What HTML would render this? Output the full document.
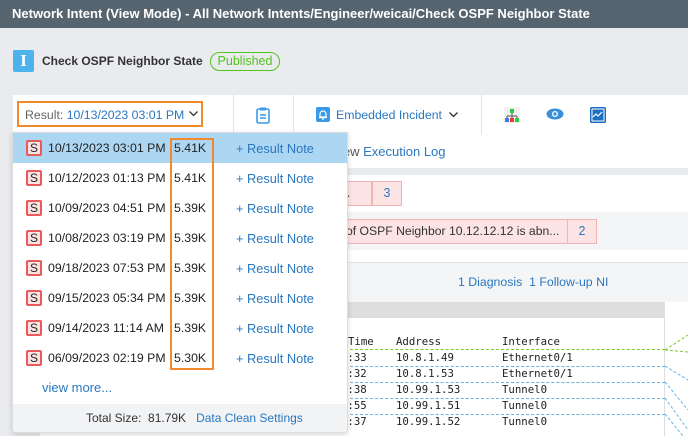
<!DOCTYPE html>
<html><head><style>
*{margin:0;padding:0;box-sizing:border-box}
body{width:688px;height:436px;overflow:hidden;position:relative;background:#e9ebee;font-family:"Liberation Sans",sans-serif;font-size:12.5px;color:#333}
.a{position:absolute;white-space:nowrap}
.blue{color:#2a77c0}
.mono{font-family:"DejaVu Sans Mono","Liberation Mono",monospace;font-size:10.7px;color:#222}
.row{position:absolute;left:0;width:335px;height:30px}
.s{position:absolute;left:13px;top:7px;width:16px;height:16px;border:2px solid #ea5a5a;background:#fde4e4;border-radius:2px;font-size:12px;line-height:12px;text-align:center;color:#222}
.d{position:absolute;left:35px;top:8px;font-size:12.3px;color:#222}
.k{position:absolute;left:161px;top:8px;font-size:12.3px;color:#222}
.n{position:absolute;left:223px;top:8px;font-size:12.8px;color:#2a77c0}
.dl{position:absolute;left:345px;width:320px;border-top:1px dashed #6ab2e0}
</style></head><body>
<div class="a" style="left:0;top:0;width:688px;height:28px;background:#56646f"></div>
<div class="a" style="left:12px;top:6px;color:#fff;font-weight:bold;font-size:13px">Network Intent (View Mode) - All Network Intents/Engineer/weicai/Check OSPF Neighbor State</div>
<div class="a" style="left:13px;top:50px;width:21px;height:22px;background:#4db3ee;border-radius:2px;color:#fff;font-family:'Liberation Serif',serif;font-weight:bold;font-size:17px;text-align:center;line-height:22px">I</div>
<div class="a" style="left:42px;top:54px;font-weight:bold;font-size:12px;color:#333">Check OSPF Neighbor State</div>
<div class="a" style="left:210px;top:52px;width:70px;height:19px;border:1.5px solid #52c41a;border-radius:10px;color:#52c41a;font-size:12.5px;text-align:center;line-height:16px">Published</div>
<!-- toolbar -->
<div class="a" style="left:13px;top:95px;width:675px;height:73px;background:#fff"></div>
<div class="a" style="left:233px;top:95px;width:1px;height:40px;background:#e4e4e4"></div>
<div class="a" style="left:293px;top:95px;width:1px;height:40px;background:#e4e4e4"></div>
<div class="a" style="left:481px;top:95px;width:1px;height:40px;background:#e4e4e4"></div>
<div class="a" style="left:17px;top:101px;width:186px;height:26px;border:2px solid #f08a2c"></div>
<div class="a" style="left:25px;top:108px;font-size:12.3px;color:#666">Result: <span class="blue">10/13/2023 03:01 PM</span></div>
<svg class="a" style="left:189px;top:111px" width="9" height="6"><path d="M0.5 0.5L4.5 4.5L8.5 0.5" stroke="#333" fill="none" stroke-width="1.3"/></svg>
<svg class="a" style="left:256px;top:107px" width="14" height="17" viewBox="0 0 14 17"><rect x="1" y="2" width="12" height="14" rx="1.5" fill="none" stroke="#3a9ae8" stroke-width="1.6"/><rect x="4" y="0.5" width="6" height="3" fill="#3a9ae8"/><path d="M4 8h6M4 11h6" stroke="#3a9ae8" stroke-width="1.4"/></svg>
<svg class="a" style="left:316px;top:107px" width="14" height="15"><rect width="14" height="15" rx="2" fill="#3a9ae8"/><path d="M4 10V7a3 3 0 0 1 6 0v3zM3 10.5h8M6 12h2" stroke="#fff" fill="none" stroke-width="1.2"/></svg>
<div class="a" style="left:336px;top:108px;font-size:12.3px;color:#2a77c0">Embedded Incident</div>
<svg class="a" style="left:449px;top:112px" width="9" height="6"><path d="M0.5 0.5L4.5 4.5L8.5 0.5" stroke="#333" fill="none" stroke-width="1.3"/></svg>
<svg class="a" style="left:504px;top:107px" width="16" height="16"><rect width="16" height="16" fill="#f2f2f2"/><rect x="6" y="2" width="4" height="4" fill="#2ecc40"/><path d="M8 6v3M3 9h10M3 9v2M8 9v2M13 9v2" stroke="#555"/><rect x="1" y="11" width="4" height="4" fill="#3a7de8"/><rect x="6" y="11" width="4" height="4" fill="#e83a3a"/><rect x="11" y="11" width="4" height="4" fill="#2ecc40"/></svg>
<svg class="a" style="left:546px;top:108px" width="18" height="12"><ellipse cx="9" cy="6" rx="8.5" ry="5.5" fill="#3a8fd8"/><circle cx="9" cy="6" r="3" fill="#fff"/><circle cx="9" cy="6" r="1.7" fill="#3a8fd8"/></svg>
<svg class="a" style="left:590px;top:107px" width="16" height="16"><rect width="16" height="16" rx="1.5" fill="#1d6fc0"/><rect x="2" y="2" width="12" height="12" fill="none" stroke="#fff" stroke-width="1"/><path d="M3 10l3-3 2 2 4-4" stroke="#fff" fill="none" stroke-width="1.2"/></svg>
<div class="a" style="left:340px;top:144px;font-size:13px;color:#555">iew <span class="blue">Execution Log</span></div>
<div class="a" style="left:13px;top:175px;width:675px;height:37px;background:#fff"></div>
<div class="a" style="left:330px;top:181px;width:42px;height:25px;background:#fde4e4;border:1px solid #f4b3b3"></div>
<div class="a" style="left:344px;top:186px;font-size:12.5px">l.</div>
<div class="a" style="left:372px;top:181px;width:30px;height:25px;background:#fde4e4;border:1px solid #f4b3b3;color:#2a77c0;text-align:center;line-height:23px">3</div>
<div class="a" style="left:13px;top:212px;width:675px;height:38px;background:#f4f5f7"></div>
<div class="a" style="left:330px;top:219px;width:238px;height:25px;background:#fde4e4;border:1px solid #f4b3b3"></div>
<div class="a" style="left:346px;top:224px;font-size:12.2px">of OSPF Neighbor 10.12.12.12 is abn...</div>
<div class="a" style="left:567px;top:219px;width:30px;height:25px;background:#fde4e4;border:1px solid #f4b3b3;color:#2a77c0;text-align:center;line-height:23px">2</div>
<div class="a" style="left:13px;top:250px;width:675px;height:12px;background:#fff"></div>
<div class="a" style="left:13px;top:262px;width:675px;height:40px;background:#f4f5f7;border-top:1px solid #e4e4e4"></div>
<div class="a" style="left:458px;top:275px;font-size:12.3px;color:#2a77c0">1 Diagnosis&nbsp; 1 Follow-up NI</div>
<div class="a" style="left:40px;top:302px;width:625px;height:134px;background:#fff;border-right:1px solid #ddd"></div>
<div class="a" style="left:40px;top:302px;width:625px;height:16px;background:#dedede"></div>
<div class="a" style="left:665px;top:302px;width:23px;height:134px;background:#fff"></div>
<div class="a mono" style="left:348px;top:335px">Time</div><div class="a mono" style="left:396px;top:335px">Address</div><div class="a mono" style="left:502px;top:335px">Interface</div>
<div class="a mono" style="left:341px;top:351px">0:33</div><div class="a mono" style="left:396px;top:351px">10.8.1.49</div><div class="a mono" style="left:502px;top:351px">Ethernet0/1</div>
<div class="a mono" style="left:341px;top:367px">0:32</div><div class="a mono" style="left:396px;top:367px">10.8.1.53</div><div class="a mono" style="left:502px;top:367px">Ethernet0/1</div>
<div class="a mono" style="left:341px;top:383px">1:38</div><div class="a mono" style="left:396px;top:383px">10.99.1.53</div><div class="a mono" style="left:502px;top:383px">Tunnel0</div>
<div class="a mono" style="left:341px;top:399px">1:55</div><div class="a mono" style="left:396px;top:399px">10.99.1.51</div><div class="a mono" style="left:502px;top:399px">Tunnel0</div>
<div class="a mono" style="left:341px;top:415px">1:37</div><div class="a mono" style="left:396px;top:415px">10.99.1.52</div><div class="a mono" style="left:502px;top:415px">Tunnel0</div>
<div class="dl" style="top:349px;border-color:#7acb2c"></div>
<div class="dl" style="top:366px"></div>
<div class="dl" style="top:382px"></div>
<div class="dl" style="top:398px"></div>
<div class="dl" style="top:414px"></div>
<svg class="a" style="left:665px;top:330px" width="23" height="106"><path d="M0 20L23 5M0 20L23 22" stroke="#7acb2c" stroke-dasharray="3,2" fill="none"/><path d="M0 36L23 50M0 52L23 80M0 68L23 100M0 84L18 106" stroke="#6ab2e0" stroke-dasharray="3,2" fill="none"/></svg>
<!-- dropdown -->
<div class="a" style="left:12px;top:132px;width:336px;height:301px;background:#fff;border:1px solid #ddd;border-radius:0 0 4px 4px;box-shadow:0 2px 6px rgba(0,0,0,.15);overflow:hidden">
<div class="row" style="top:0;background:#acd6f2"><div class="s">S</div><div class="d">10/13/2023 03:01 PM</div><div class="k">5.41K</div><div class="n">+ Result Note</div></div>
<div class="row" style="top:30px"><div class="s">S</div><div class="d">10/12/2023 01:13 PM</div><div class="k">5.41K</div><div class="n">+ Result Note</div></div>
<div class="row" style="top:60px"><div class="s">S</div><div class="d">10/09/2023 04:51 PM</div><div class="k">5.39K</div><div class="n">+ Result Note</div></div>
<div class="row" style="top:90px"><div class="s">S</div><div class="d">10/08/2023 03:19 PM</div><div class="k">5.39K</div><div class="n">+ Result Note</div></div>
<div class="row" style="top:120px"><div class="s">S</div><div class="d">09/18/2023 07:53 PM</div><div class="k">5.39K</div><div class="n">+ Result Note</div></div>
<div class="row" style="top:150px"><div class="s">S</div><div class="d">09/15/2023 05:34 PM</div><div class="k">5.39K</div><div class="n">+ Result Note</div></div>
<div class="row" style="top:180px"><div class="s">S</div><div class="d">09/14/2023 11:14 AM</div><div class="k">5.39K</div><div class="n">+ Result Note</div></div>
<div class="row" style="top:210px"><div class="s">S</div><div class="d">06/09/2023 02:19 PM</div><div class="k">5.30K</div><div class="n">+ Result Note</div></div>
<div class="a" style="left:157px;top:5px;width:44px;height:232px;border:2px solid #f08a2c"></div>
<div class="a" style="left:29px;top:247px;font-size:13px;color:#2a77c0">view more...</div>
<div class="a" style="left:0;top:271px;width:336px;height:30px;background:#f2f3f5"></div>
<div class="a" style="left:73px;top:278px;font-size:12px;color:#333">Total Size:&nbsp; 81.79K&nbsp;&nbsp; <span class="blue">Data Clean Settings</span></div>
</div>
</body></html>
